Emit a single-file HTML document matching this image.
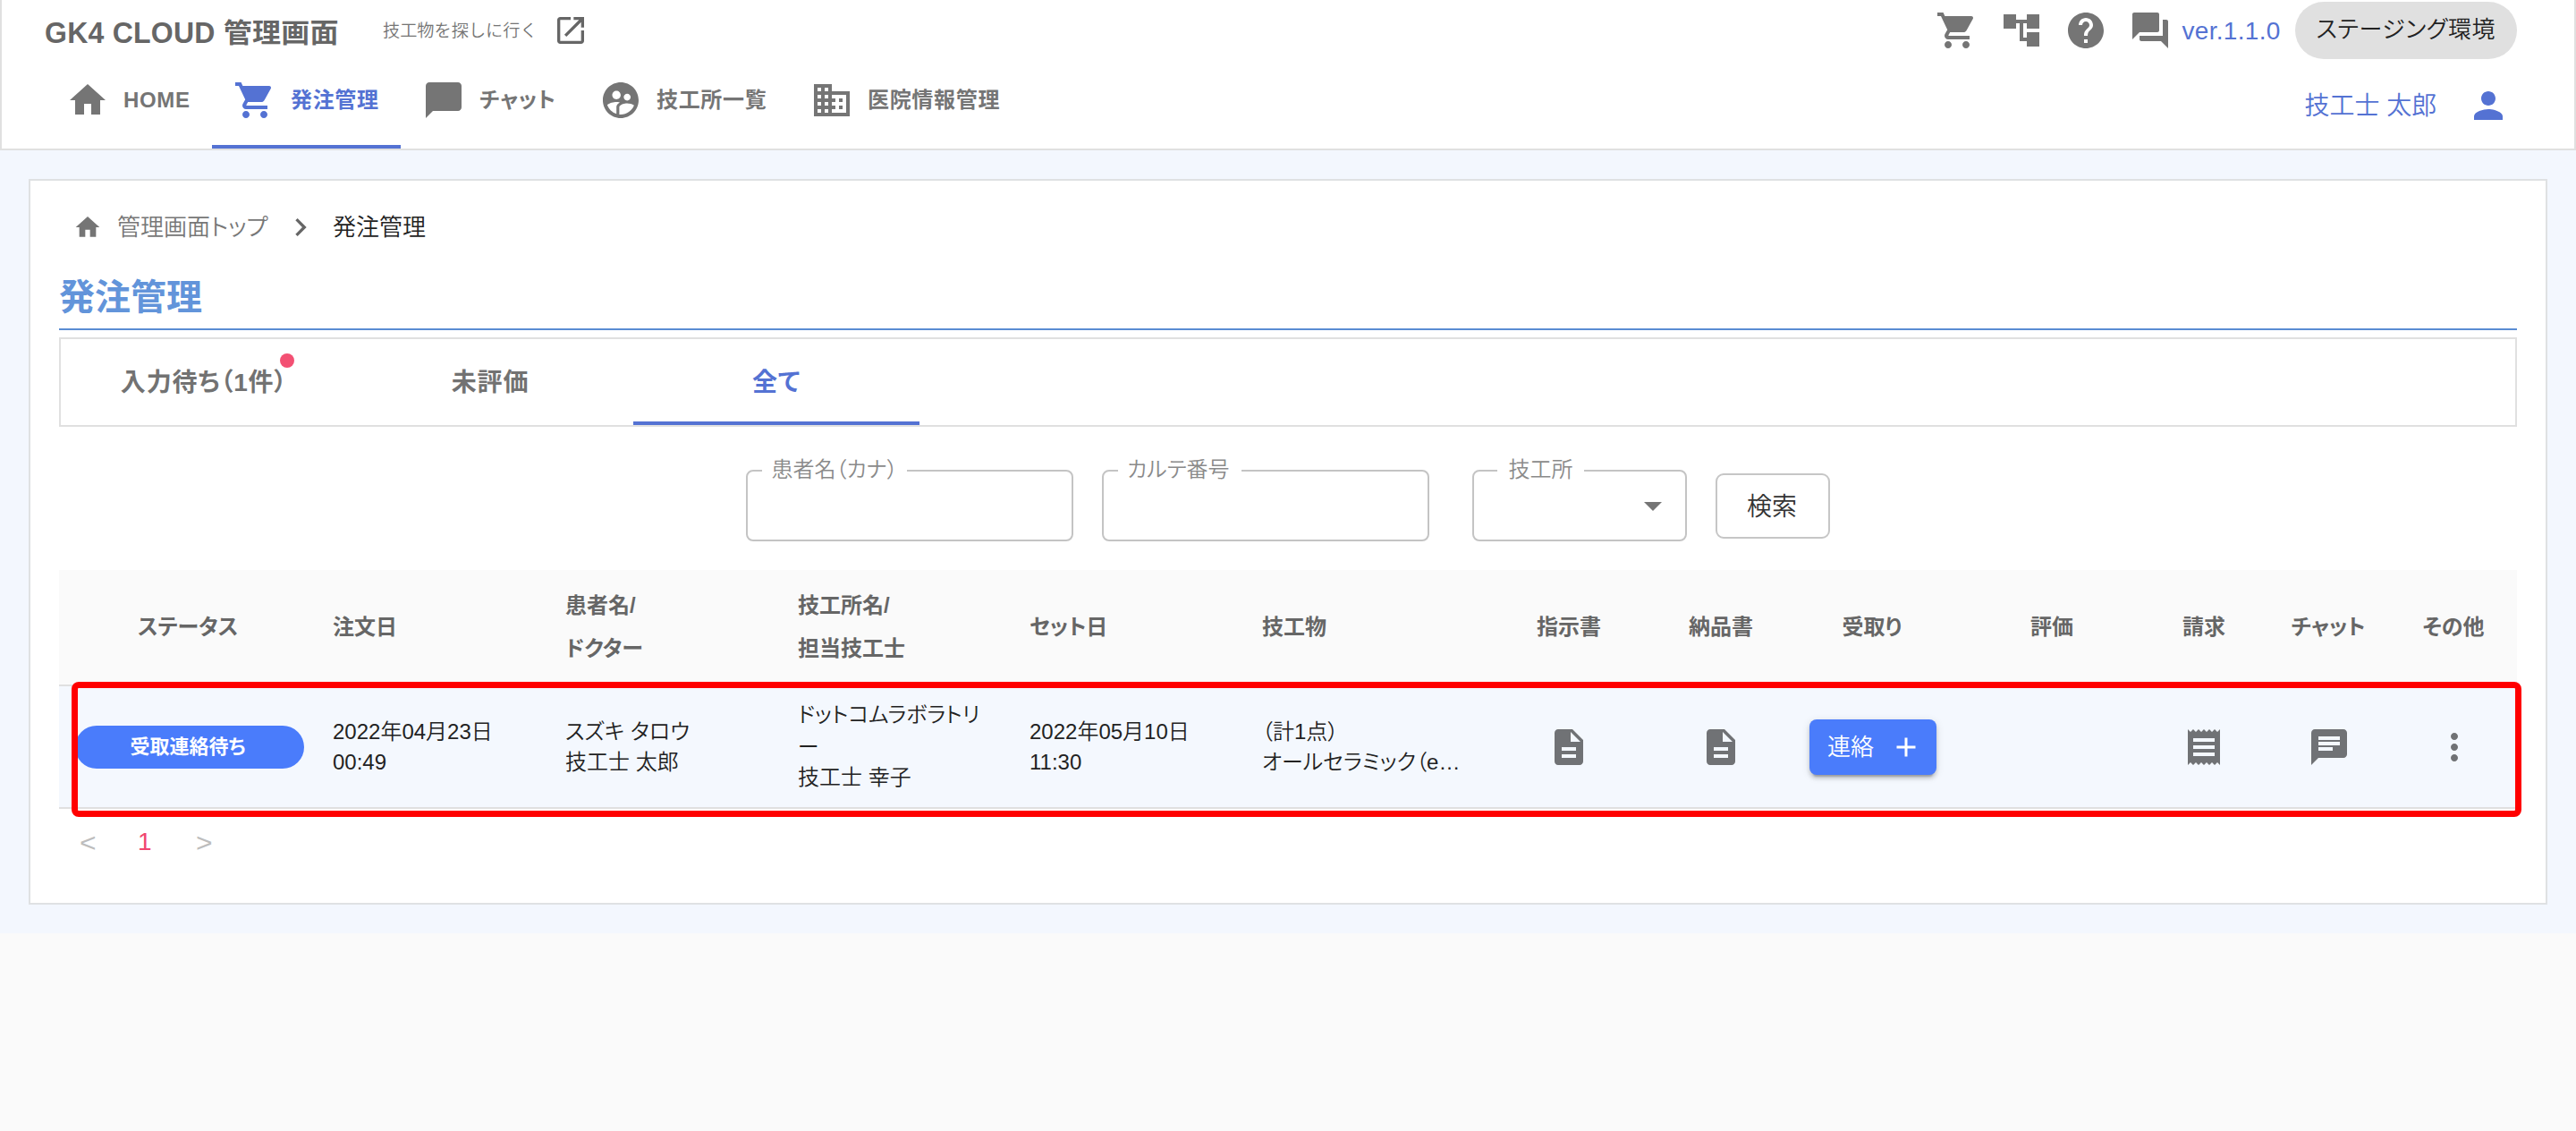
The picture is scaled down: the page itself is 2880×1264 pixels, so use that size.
<!DOCTYPE html>
<html lang="ja">
<head>
<meta charset="utf-8">
<title>GK4 CLOUD 管理画面</title>
<style>
*{box-sizing:border-box;margin:0;padding:0}
html,body{width:2880px;height:1264px;overflow:hidden;background:#fafafa}
body{font-family:"Liberation Sans","Noto Sans CJK JP",sans-serif;color:#222;font-weight:350;position:relative;font-feature-settings:"palt" 1;-webkit-font-smoothing:antialiased}
.abs{position:absolute}
svg{display:block;fill:currentColor}
.t{position:absolute;white-space:nowrap;line-height:1}
/* header */
#hdr{position:absolute;left:0;top:0;width:2880px;height:168px;background:#fff;border:2px solid #e0e0e0;border-top:none}
#bg{position:absolute;left:0;top:168px;width:2880px;height:875px;background:#f3f7fe}
#card{position:absolute;left:32px;top:200px;width:2816px;height:811px;background:#fff;border:2px solid #dfe1e3}
.ico{position:absolute;color:#757575}
.nav{position:absolute;top:64px;height:102px;color:#757575;font-weight:bold;font-size:24px;letter-spacing:.686px}
.nav svg{position:absolute;left:24px;top:24px;width:48px;height:48px}
.nav span{position:absolute;left:88px;top:0;line-height:96px;white-space:nowrap}
.nav.on{color:#5472d3;border-bottom:4px solid #5472d3}

.tab{font-size:28px;font-weight:bold;color:#727272;text-align:center;line-height:95px;letter-spacing:.8px}
.fs{position:absolute;top:512px;height:93px;border:2px solid #c4c4c4;border-radius:8px;background:#fff}
.fs legend{height:28px;position:relative}
.fs legend span{position:absolute;left:12px;top:1px;font-size:24px;line-height:24px;color:#8a8a8a;white-space:nowrap}
.th{font-size:24px;line-height:32px;font-weight:bold;color:#666}
.th.c{width:200px;text-align:center}
.td{font-size:24px;line-height:34px;color:#222}
</style>
</head>
<body>
<div id="hdr"></div>
<div id="bg"></div>
<div id="card"></div>

<!-- header -->
<div class="t" style="left:50px;top:17px;font-size:32px;line-height:40px;font-weight:bold;color:#666;letter-spacing:.24px"><span style="display:inline-block;transform:scaleY(1.06);transform-origin:50% 78%">GK4 CLOUD</span> <span style="display:inline-block;transform:scaleY(.94);transform-origin:50% 55%">管理画面</span></div>
<div class="t" style="left:428px;top:23px;font-size:19.2px;line-height:24px;color:#757575;font-feature-settings:normal">技工物を探しに行く</div>
<svg class="ico" style="left:618px;top:14px;width:40px;height:40px;color:#666" viewBox="0 0 24 24"><path d="M19 19H5V5h7V3H5c-1.110 0-2 .9-2 2v14c0 1.100.89 2 2 2h14c1.100 0 2-.9 2-2v-7h-2v7zM14 3v2h3.590l-9.830 9.830 1.410 1.410L19 6.410V10h2V3h-7z"/></svg>

<div class="nav" style="left:50px;width:187px"><svg viewBox="0 0 24 24"><path d="M10 20v-6h4v6h5v-8h3L12 3 2 12h3v8z"/></svg><span>HOME</span></div>
<div class="nav on" style="left:237px;width:211px"><svg viewBox="0 0 24 24"><path d="M7 18c-1.100 0-1.990.9-1.990 2S5.900 22 7 22s2-.9 2-2-.9-2-2-2zM1 2v2h2l3.600 7.590-1.350 2.450c-.16.28-.25.61-.25.96 0 1.100.9 2 2 2h12v-2H7.420c-.14 0-.25-.11-.25-.25l.03-.12.9-1.630h7.450c.75 0 1.410-.41 1.750-1.030l3.580-6.490c.08-.14.12-.31.12-.48 0-.55-.45-1-1-1H5.210l-.94-2H1zm16 16c-1.100 0-1.990.9-1.990 2s.89 2 1.990 2 2-.9 2-2-.9-2-2-2z"/></svg><span>発注管理</span></div>
<div class="nav" style="left:448px;width:198px"><svg viewBox="0 0 24 24"><path d="M20 2H4c-1.100 0-2 .9-2 2v18l4-4h14c1.100 0 2-.9 2-2V4c0-1.100-.9-2-2-2z"/></svg><span>チャット</span></div>
<div class="nav" style="left:646px;width:236px"><svg viewBox="0 0 24 24"><path d="M11.990 2c-5.520 0-10 4.480-10 10s4.480 10 10 10 10-4.480 10-10-4.480-10-10-10zm3.610 6.340c1.070 0 1.930.86 1.930 1.930 0 1.070-.86 1.930-1.930 1.930-1.070 0-1.930-.86-1.930-1.930-.01-1.070.86-1.930 1.930-1.930zm-6-1.580c1.300 0 2.360 1.060 2.360 2.360 0 1.300-1.060 2.360-2.360 2.360s-2.360-1.060-2.360-2.360c0-1.310 1.050-2.360 2.360-2.360zm0 9.130v3.750c-2.400-.75-4.300-2.600-5.140-4.960 1.050-1.120 3.670-1.690 5.140-1.690.53 0 1.200.08 1.900.22-1.640.87-1.900 2.020-1.900 2.680zM11.990 20c-.27 0-.53-.01-.79-.04v-4.070c0-1.420 2.940-2.130 4.400-2.130 1.070 0 2.920.39 3.840 1.150-1.170 2.970-4.060 5.090-7.450 5.090z"/></svg><span>技工所一覧</span></div>
<div class="nav" style="left:882px;width:260px"><svg viewBox="0 0 24 24"><path d="M12 7V3H2v18h20V7H12zM6 19H4v-2h2v2zm0-4H4v-2h2v2zm0-4H4V9h2v2zm0-4H4V5h2v2zm4 12H8v-2h2v2zm0-4H8v-2h2v2zm0-4H8V9h2v2zm0-4H8V5h2v2zm10 12h-8v-2h2v-2h-2v-2h2v-2h-2V9h8v10zm-2-8h-2v2h2v-2zm0 4h-2v2h2v-2z"/></svg><span>医院情報管理</span></div>

<svg class="ico" style="left:2164px;top:10px;width:48px;height:48px" viewBox="0 0 24 24"><path d="M7 18c-1.100 0-1.990.9-1.990 2S5.900 22 7 22s2-.9 2-2-.9-2-2-2zM1 2v2h2l3.600 7.590-1.350 2.450c-.16.28-.25.61-.25.96 0 1.100.9 2 2 2h12v-2H7.420c-.14 0-.25-.11-.25-.25l.03-.12.9-1.630h7.450c.75 0 1.410-.41 1.750-1.030l3.580-6.490c.08-.14.12-.31.12-.48 0-.55-.45-1-1-1H5.210l-.94-2H1zm16 16c-1.100 0-1.990.9-1.990 2s.89 2 1.990 2 2-.9 2-2-.9-2-2-2z"/></svg>
<svg class="ico" style="left:2236px;top:10px;width:48px;height:48px" viewBox="0 0 24 24"><path d="M22 11V3h-7v3H9V3H2v8h7V8h2v10h4v3h7v-8h-7v3h-2V8h2v3z"/></svg>
<svg class="ico" style="left:2308px;top:10px;width:48px;height:48px" viewBox="0 0 24 24"><path d="M12 2C6.480 2 2 6.480 2 12s4.480 10 10 10 10-4.480 10-10S17.520 2 12 2zm1 17h-2v-2h2v2zm2.070-7.750l-.9.92C13.450 12.900 13 13.500 13 15h-2v-.5c0-1.100.45-2.100 1.170-2.830l1.240-1.260c.37-.36.59-.86.59-1.410 0-1.100-.9-2-2-2s-2 .9-2 2H8c0-2.210 1.790-4 4-4s4 1.790 4 4c0 .88-.36 1.680-.93 2.250z"/></svg>
<svg class="ico" style="left:2380px;top:10px;width:48px;height:48px" viewBox="0 0 24 24"><path d="M21 6h-2v9H6v2c0 .55.45 1 1 1h11l4 4V7c0-.55-.45-1-1-1zm-4 6V3c0-.55-.45-1-1-1H3c-.55 0-1 .45-1 1v14l4-4h10c.55 0 1-.45 1-1z"/></svg>
<div class="t" style="left:2439.5px;top:18.5px;font-size:28px;line-height:32px;color:#5472d3;letter-spacing:.3px">ver.1.1.0</div>
<div class="abs" style="left:2566px;top:2px;width:248px;height:64px;border-radius:32px;background:#e0e0e0"></div>
<div class="t" style="left:2589.5px;top:16.7px;font-size:26px;line-height:32px;color:#222;letter-spacing:.55px">ステージング環境</div>
<div class="t" style="left:2576.5px;top:103px;font-size:28px;line-height:32px;color:#5472d3">技工士 太郎</div>
<svg class="ico" style="left:2758px;top:94px;width:48px;height:48px;color:#5472d3" viewBox="0 0 24 24"><path d="M12 12c2.210 0 4-1.790 4-4s-1.790-4-4-4-4 1.790-4 4 1.790 4 4 4zm0 2c-2.670 0-8 1.340-8 4v2h16v-2c0-2.660-5.330-4-8-4z"/></svg>

<!-- breadcrumb -->
<svg class="ico" style="left:82px;top:238px;width:32px;height:32px" viewBox="0 0 24 24"><path d="M10 20v-6h4v6h5v-8h3L12 3 2 12h3v8z"/></svg>
<div class="t" style="left:131px;top:238px;font-size:26px;line-height:32px;color:#777">管理画面トップ</div>
<svg class="ico" style="left:316px;top:234px;width:40px;height:40px;color:#666" viewBox="0 0 24 24"><path d="M10 6L8.590 7.410 13.170 12l-4.580 4.590L10 18l6-6z"/></svg>
<div class="t" style="left:372px;top:238px;font-size:26px;line-height:32px;color:#222">発注管理</div>

<!-- title -->
<div class="t" style="left:66px;top:308px;font-size:40px;line-height:48px;font-weight:bold;color:#6294da">発注管理</div>
<div class="abs" style="left:66px;top:367px;width:2748px;height:2px;background:#5a8cd3"></div>

<!-- tabs -->
<div class="abs" style="left:66px;top:377px;width:2748px;height:100px;border:2px solid #e0e0e0;background:#fff"></div>
<div class="t tab" style="left:68px;top:380px;width:320px">入力待ち（1件）</div>
<div class="abs" style="left:313px;top:395px;width:16px;height:16px;border-radius:8px;background:#f35073"></div>
<div class="t tab" style="left:388px;top:380px;width:320px">未評価</div>
<div class="t tab" style="left:708px;top:380px;width:320px;color:#5472d3">全て</div>
<div class="abs" style="left:708px;top:471px;width:320px;height:4px;background:#5472d3"></div>

<!-- search -->
<fieldset class="fs" style="left:834px;width:366px"><legend style="margin-left:16px;width:162px"><span style="left:10.5px">患者名（カナ）</span></legend></fieldset>
<fieldset class="fs" style="left:1232px;width:366px"><legend style="margin-left:16px;width:138px"><span style="left:10px">カルテ番号</span></legend></fieldset>
<fieldset class="fs" style="left:1646px;width:240px"><legend style="margin-left:26px;width:97px"><span style="left:12.5px">技工所</span></legend></fieldset>
<svg class="ico" style="left:1824px;top:541px;width:48px;height:48px;color:#757575" viewBox="0 0 24 24"><path d="M7 10l5 5 5-5z"/></svg>
<div class="abs" style="left:1918px;top:529px;width:128px;height:73px;border:2px solid #c6c6c6;border-radius:9px;background:#fff;font-size:28px;line-height:71px;text-align:center;color:#333;padding-right:2px">検索</div>

<!-- table -->
<div class="abs" style="left:66px;top:637px;width:2748px;height:128px;background:#fafafa"></div>
<div class="abs" style="left:66px;top:765px;width:2748px;height:2px;background:#e0e0e0"></div>
<div class="abs" style="left:66px;top:767px;width:2748px;height:135px;background:#f4f8fe"></div>
<div class="abs" style="left:66px;top:902px;width:2748px;height:2px;background:#e0e0e0"></div>

<div class="t th" style="left:154px;top:685px">ステータス</div>
<div class="t th" style="left:372px;top:685px">注文日</div>
<div class="t th" style="left:632px;top:661px">患者名/</div>
<div class="t th" style="left:632px;top:709px">ドクター</div>
<div class="t th" style="left:892px;top:661px">技工所名/</div>
<div class="t th" style="left:892px;top:709px">担当技工士</div>
<div class="t th" style="left:1151px;top:685px">セット日</div>
<div class="t th" style="left:1411px;top:685px">技工物</div>
<div class="t th c" style="left:1654px;top:685px">指示書</div>
<div class="t th c" style="left:1824px;top:685px">納品書</div>
<div class="t th c" style="left:1993px;top:685px">受取り</div>
<div class="t th c" style="left:2194px;top:685px">評価</div>
<div class="t th c" style="left:2364px;top:685px">請求</div>
<div class="t th c" style="left:2503px;top:685px">チャット</div>
<div class="t th c" style="left:2643px;top:685px">その他</div>

<div class="abs" style="left:84px;top:811px;width:256px;height:48px;border-radius:24px;background:#4a7cfb"></div>
<div class="t" style="left:82px;top:811px;width:256px;text-align:center;font-size:22px;line-height:48px;font-weight:bold;color:#fff">受取連絡待ち</div>
<div class="t td" style="left:372px;top:801px">2022年04月23日</div>
<div class="t td" style="left:372px;top:835px">00:49</div>
<div class="t td" style="left:632px;top:801px">スズキ タロウ</div>
<div class="t td" style="left:632px;top:835px">技工士 太郎</div>
<div class="t td" style="left:892px;top:782px">ドットコムラボラトリ</div>
<div class="t td" style="left:892px;top:818px">ー</div>
<div class="t td" style="left:892px;top:852px">技工士 幸子</div>
<div class="t td" style="left:1151px;top:801px">2022年05月10日</div>
<div class="t td" style="left:1151px;top:835px">11:30</div>
<div class="t td" style="left:1411px;top:801px">（計1点）</div>
<div class="t td" style="left:1411px;top:835px">オールセラミック（e…</div>

<svg class="ico" style="left:1730px;top:811px;width:48px;height:48px;color:rgba(0,0,0,.54)" viewBox="0 0 24 24"><path d="M14 2H6c-1.100 0-1.990.9-1.990 2L4 20c0 1.100.89 2 1.990 2H18c1.100 0 2-.9 2-2V8l-6-6zm2 16H8v-2h8v2zm0-4H8v-2h8v2zm-3-5V3.500L18.500 9H13z"/></svg>
<svg class="ico" style="left:1900px;top:811px;width:48px;height:48px;color:rgba(0,0,0,.54)" viewBox="0 0 24 24"><path d="M14 2H6c-1.100 0-1.990.9-1.990 2L4 20c0 1.100.89 2 1.990 2H18c1.100 0 2-.9 2-2V8l-6-6zm2 16H8v-2h8v2zm0-4H8v-2h8v2zm-3-5V3.500L18.500 9H13z"/></svg>
<div class="abs" style="left:2023px;top:804px;width:142px;height:62px;border-radius:8px;background:#4a7cfb;box-shadow:0 6px 2px -4px rgba(0,0,0,.2),0 4px 4px 0 rgba(0,0,0,.14),0 2px 10px 0 rgba(0,0,0,.12)"></div>
<div class="t" style="left:2043px;top:818.6px;font-size:26px;line-height:32px;color:#fff">連絡</div>
<svg class="ico" style="left:2113px;top:817px;width:36px;height:36px;color:#fff" viewBox="0 0 24 24"><path d="M19 13h-6v6h-2v-6H5v-2h6V5h2v6h6v2z"/></svg>
<svg class="ico" style="left:2440px;top:811px;width:48px;height:48px;color:rgba(0,0,0,.54)" viewBox="0 0 24 24"><path d="M18 17H6v-2h12v2zm0-4H6v-2h12v2zm0-4H6V7h12v2zM3 22l1.500-1.500L6 22l1.500-1.500L9 22l1.500-1.500L12 22l1.500-1.500L15 22l1.500-1.500L18 22l1.500-1.500L21 22V2l-1.500 1.500L18 2l-1.500 1.500L15 2l-1.500 1.500L12 2l-1.500 1.500L9 2 7.500 3.500 6 2 4.500 3.500 3 2v20z"/></svg>
<svg class="ico" style="left:2580px;top:811px;width:48px;height:48px;color:rgba(0,0,0,.54)" viewBox="0 0 24 24"><path d="M20 2H4c-1.100 0-1.990.9-1.990 2L2 22l4-4h14c1.100 0 2-.9 2-2V4c0-1.100-.9-2-2-2zM6 9h12v2H6V9zm8 5H6v-2h8v2zm4-6H6V6h12v2z"/></svg>
<svg class="ico" style="left:2720px;top:811px;width:48px;height:48px;color:rgba(0,0,0,.54)" viewBox="0 0 24 24"><path d="M12 8c1.100 0 2-.9 2-2s-.9-2-2-2-2 .9-2 2 .9 2 2 2zm0 2c-1.100 0-2 .9-2 2s.9 2 2 2 2-.9 2-2-.9-2-2-2zm0 6c-1.100 0-2 .9-2 2s.9 2 2 2 2-.9 2-2-.9-2-2-2z"/></svg>

<!-- red highlight -->
<div class="abs" style="left:80px;top:762px;width:2739px;height:151px;border:7px solid #f00;border-radius:8px"></div>

<!-- pagination -->
<div class="t" style="left:89px;top:926px;font-size:30px;line-height:32px;color:#bdbdbd;transform:scaleX(1.06);transform-origin:0 50%">&lt;</div>
<div class="t" style="left:154px;top:924.6px;font-size:28px;line-height:32px;color:#f0466f">1</div>
<div class="t" style="left:219px;top:926px;font-size:30px;line-height:32px;color:#bdbdbd;transform:scaleX(1.06);transform-origin:0 50%">&gt;</div>

</body>
</html>
